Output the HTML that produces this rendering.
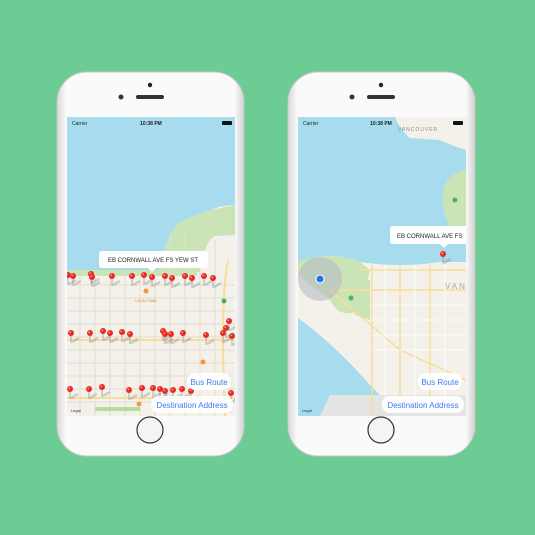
<!DOCTYPE html><html><head><style>
html,body{margin:0;padding:0;background:#6dcc93;width:535px;height:535px;overflow:hidden;font-family:"Liberation Sans",sans-serif}
svg{display:block}
</style></head><body>
<svg width="535" height="535" viewBox="0 0 535 535" xmlns="http://www.w3.org/2000/svg" font-family="Liberation Sans, sans-serif">
<defs>
<linearGradient id="bd" x1="0" y1="0" x2="1" y2="0"><stop offset="0" stop-color="#d8d8d8"/><stop offset="0.05" stop-color="#fafafa"/><stop offset="0.95" stop-color="#fafafa"/><stop offset="1" stop-color="#d0d0d0"/></linearGradient>
<clipPath id="s1"><rect x="67" y="117" width="168" height="299"/></clipPath>
<clipPath id="s2"><rect x="298" y="117" width="168" height="299"/></clipPath>
<g id="pin"><line x1="1" y1="9" x2="8" y2="5" stroke="#777" stroke-opacity="0.3" stroke-width="2.5"/><line x1="0" y1="0" x2="0" y2="10" stroke="#999" stroke-width="0.8"/><circle cx="0" cy="0" r="3" fill="#e82a22"/><circle cx="-0.8" cy="-0.8" r="1" fill="#ff8a80"/></g>
</defs>
<!-- phone 1 -->
<rect x="57" y="72" width="187" height="384" rx="30" fill="url(#bd)" stroke="#c8c8c8"/>
<circle cx="150" cy="85" r="2.2" fill="#222"/><circle cx="121" cy="97" r="2.5" fill="#333"/><rect x="136" y="95" width="28" height="4" rx="2" fill="#333"/>
<circle cx="150" cy="430" r="13" fill="#f4f4f4" stroke="#333" stroke-width="1.2"/>
<g clip-path="url(#s1)">
<rect x="67" y="117" width="168" height="299" fill="#f4f1ea"/>
<path d="M67 117H235V205Q215 205 205 215Q180 220 175 228Q165 240 160 272L67 272Z" fill="#a7dcef"/>
<path d="M160 272Q165 235 180 222Q205 210 235 205V235L215 236Q205 240 200 272Z" fill="#cbe4b6"/>
<rect x="67" y="270" width="130" height="6" fill="#cbe4b6"/>
<g stroke="#e2ddd2" stroke-width="1">
<path d="M67 285H235M67 298H235M67 311H235M67 324H235M67 337H235M67 350H235M67 363H235M67 376H235M67 389H235M67 402H235"/>
<path d="M80 275V416M95 275V416M110 275V416M125 275V416M140 275V416M155 275V416M170 230V416M185 230V416M200 230V416M215 240V416"/>
</g>
<path d="M67 340H235M67 398H235" stroke="#f7dd9a" stroke-width="2"/>
<path d="M228 260Q220 300 225 416" stroke="#f7dd9a" stroke-width="2" fill="none"/>
<rect x="95" y="407" width="45" height="4" fill="#b6dc9c"/>
<circle cx="146" cy="291" r="2.5" fill="#f09a3c"/><text x="146" y="302" font-size="3.5" fill="#e0852a" text-anchor="middle">LOCAL Public</text>
<circle cx="203" cy="362" r="2.5" fill="#f09a3c"/><circle cx="139" cy="404" r="2.5" fill="#f09a3c"/>
<circle cx="224" cy="301" r="2.5" fill="#4cb356"/>
<text x="72" y="125" font-size="5" fill="#222">Carrier</text>
<text x="151" y="125" font-size="5" fill="#222" text-anchor="middle" font-weight="bold">10:38 PM</text>
<rect x="222" y="121" width="10" height="4" rx="1" fill="#111"/>
<g>
<use href="#pin" x="68" y="275"/><use href="#pin" x="73" y="276"/><use href="#pin" x="91" y="274"/><use href="#pin" x="92" y="277"/><use href="#pin" x="112" y="276"/><use href="#pin" x="132" y="276"/><use href="#pin" x="144" y="275"/><use href="#pin" x="152" y="277"/><use href="#pin" x="165" y="276"/><use href="#pin" x="172" y="278"/><use href="#pin" x="185" y="276"/><use href="#pin" x="192" y="278"/><use href="#pin" x="204" y="276"/><use href="#pin" x="213" y="278"/>
<use href="#pin" x="71" y="333"/><use href="#pin" x="90" y="333"/><use href="#pin" x="103" y="331"/><use href="#pin" x="110" y="333"/><use href="#pin" x="122" y="332"/><use href="#pin" x="130" y="334"/><use href="#pin" x="163" y="331"/><use href="#pin" x="165" y="334"/><use href="#pin" x="171" y="334"/><use href="#pin" x="183" y="333"/><use href="#pin" x="206" y="335"/><use href="#pin" x="223" y="333"/><use href="#pin" x="232" y="336"/><use href="#pin" x="229" y="321"/><use href="#pin" x="226" y="328"/>
<use href="#pin" x="70" y="389"/><use href="#pin" x="89" y="389"/><use href="#pin" x="102" y="387"/><use href="#pin" x="129" y="390"/><use href="#pin" x="142" y="388"/><use href="#pin" x="153" y="388"/><use href="#pin" x="160" y="389"/><use href="#pin" x="165" y="391"/><use href="#pin" x="173" y="390"/><use href="#pin" x="182" y="389"/><use href="#pin" x="191" y="391"/><use href="#pin" x="231" y="393"/>
</g>
<path d="M99 251H205Q208 251 208 254V265Q208 268 205 268H156L152 272L148 268H102Q99 268 99 265V254Q99 251 102 251Z" fill="#fff"/>
<text x="153" y="262" font-size="6" fill="#222" text-anchor="middle">EB CORNWALL AVE FS YEW ST</text>
<rect x="187" y="373" width="44" height="17" rx="8" fill="#fff" fill-opacity="0.9"/>
<text x="209" y="385" font-size="8" fill="#3d7bf5" text-anchor="middle">Bus Route</text>
<rect x="151" y="396" width="82" height="17" rx="8" fill="#fff" fill-opacity="0.9"/>
<text x="192" y="408" font-size="8" fill="#3d7bf5" text-anchor="middle">Destination Address</text>
<text x="71" y="412" font-size="4" fill="#333">Legal</text>
</g>
<!-- phone 2 -->
<rect x="288" y="72" width="187" height="384" rx="30" fill="url(#bd)" stroke="#c8c8c8"/>
<circle cx="381" cy="85" r="2.2" fill="#222"/><circle cx="352" cy="97" r="2.5" fill="#333"/><rect x="367" y="95" width="28" height="4" rx="2" fill="#333"/>
<circle cx="381" cy="430" r="13" fill="#f4f4f4" stroke="#333" stroke-width="1.2"/>
<g clip-path="url(#s2)">
<rect x="298" y="117" width="168" height="299" fill="#a7dcef"/>
<path d="M395 117H466V150Q450 145 440 140L410 138Q400 130 395 117Z" fill="#f4f1ea"/>
<path d="M466 170Q440 175 443 205Q448 235 466 240Z" fill="#cbe4b6"/>
<path d="M298 262Q330 250 360 262Q400 268 440 262L466 262V416H400Q385 400 370 385Q335 345 298 318Z" fill="#f4f1ea"/>
<path d="M298 262Q330 250 360 262L370 270L360 310Q340 320 330 300L298 275Z" fill="#cbe4b6"/>
<path d="M350 280H370V320L355 315Z" fill="#cbe4b6"/>
<path d="M330 395H466V416H320Z" fill="#e4e4e2"/>
<g stroke="#f7dd9a" stroke-width="1.5" fill="none">
<path d="M360 270H466M330 290H466M372 265V416M400 265V400M430 265V410M330 290L400 350L466 380"/>
</g>
<g stroke="#fff" stroke-width="0.8"><path d="M372 305H466M372 320H466M372 335H466M372 350H466M385 265V400M415 265V405M445 265V410"/></g>
<circle cx="320" cy="279" r="22" fill="#b8bcc2" fill-opacity="0.6"/>
<circle cx="320" cy="279" r="4.5" fill="#fff"/><circle cx="320" cy="279" r="3.5" fill="#1a7cf5"/>
<circle cx="351" cy="298" r="2.5" fill="#4cb356"/><circle cx="455" cy="200" r="2.5" fill="#4cb356"/>
<text x="303" y="125" font-size="5" fill="#222">Carrier</text>
<text x="381" y="125" font-size="5" fill="#222" text-anchor="middle" font-weight="bold">10:38 PM</text>
<rect x="453" y="121" width="10" height="4" rx="1" fill="#111"/>
<text x="418" y="131" font-size="5" fill="#888" text-anchor="middle" letter-spacing="1">VANCOUVER</text>
<text x="445" y="289" font-size="8" fill="#aaa" letter-spacing="2">VANC</text>
<use href="#pin" x="443" y="254"/>
<path d="M390 226H466V244H448L444 248L440 244H393Q390 244 390 241V229Q390 226 393 226Z" fill="#fff"/>
<text x="397" y="238" font-size="6" fill="#222">EB CORNWALL AVE FS</text>
<rect x="418" y="373" width="44" height="17" rx="8" fill="#fff" fill-opacity="0.9"/>
<text x="440" y="385" font-size="8" fill="#3d7bf5" text-anchor="middle">Bus Route</text>
<rect x="382" y="396" width="82" height="17" rx="8" fill="#fff" fill-opacity="0.9"/>
<text x="423" y="408" font-size="8" fill="#3d7bf5" text-anchor="middle">Destination Address</text>
<text x="302" y="412" font-size="4" fill="#333">Legal</text>
</g>
</svg>
</body></html>
